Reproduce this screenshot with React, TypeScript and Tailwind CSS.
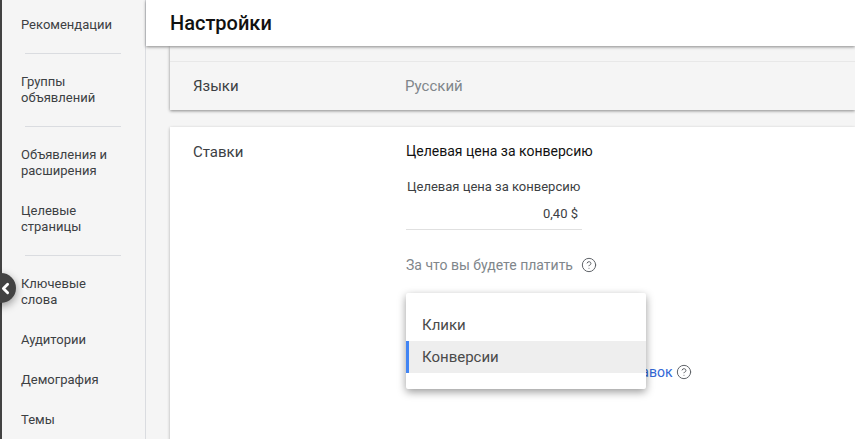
import { ChevronLeft, CircleHelp } from 'lucide-react';

function NavItem({ children }: { children: React.ReactNode }) {
  return (
    <div className="flex min-h-10 items-center py-3 pl-[19px] pr-4 text-[13px] leading-4 text-[#3c4043]">
      <span>{children}</span>
    </div>
  );
}

function NavDivider() {
  return <div className="mx-[23px] my-2 h-px w-[96px] bg-[#dadce0]" />;
}

export default function App() {
  return (
    <div className="relative flex h-[439px] w-[855px] overflow-hidden bg-[#f5f5f5] font-['Roboto',sans-serif]">
      <aside className="h-full w-[146px] shrink-0 border-l-2 border-r border-l-[#424242] border-r-[#dadce0] bg-[#f5f5f5] pt-[5px]">
        <NavItem>Рекомендации</NavItem>
        <NavDivider />
        <NavItem>Группы<br />объявлений</NavItem>
        <NavDivider />
        <NavItem>Объявления и<br />расширения</NavItem>
        <NavItem>Целевые<br />страницы</NavItem>
        <NavDivider />
        <NavItem>Ключевые<br />слова</NavItem>
        <NavItem>Аудитории</NavItem>
        <NavItem>Демография</NavItem>
        <NavItem>Темы</NavItem>
      </aside>

      <button className="absolute left-[-14px] top-[273px] flex h-[30px] w-[30px] items-center justify-end rounded-full bg-[#424242] pr-[2px] text-white shadow-[0_3px_8px_rgba(0,0,0,0.4)]">
        <ChevronLeft size={17} strokeWidth={4} />
      </button>

      <main className="relative min-w-0 flex-1">
        <header className="relative z-10 flex h-[46px] items-center bg-white pb-[1px] pl-6 text-[20px] font-medium text-[#111] shadow-[0_1px_3px_rgba(0,0,0,0.45)]">
          Настройки
        </header>

        <div className="ml-6 flex h-[64px] flex-col justify-end bg-[#f5f5f5] shadow-[0_1px_3px_rgba(0,0,0,0.45)]">
          <div className="flex h-[49px] items-center border-t border-[#e8e8e8] pl-[23px] text-[15px]">
            <span className="w-[212px] text-[#3c4043]">Языки</span>
            <span className="text-[#80868b]">Русский</span>
          </div>
        </div>

        <div className="ml-6 mt-[17px] flex h-[400px] bg-white pl-[23px] pt-[14px] shadow-[0_1px_3px_rgba(0,0,0,0.3)]">
          <div className="w-[214px] pt-[1px] text-[15px] leading-5 text-[#3c4043]">Ставки</div>
          <div className="-ml-px flex flex-col">
            <div className="text-[14px] leading-5 text-[#111]">Целевая цена за конверсию</div>
            <div className="mt-[18px] pl-px text-[13px] leading-4 text-[#3c4043]">Целевая цена за конверсию</div>
            <div className="mt-[6px] w-[176px] border-b border-[#e0e0e0] pb-[5px] pr-[4px] pt-[3px] text-right text-[13px] leading-5 text-[#3c4043]">
              0,40 $
            </div>
            <div className="mt-[25px] flex items-center gap-2 text-[14px] leading-5 text-[#80868b]">
              За что вы будете платить
              <CircleHelp size={16} strokeWidth={1.5} className="text-[#5f6368]" />
            </div>
            <div className="mt-[87px] flex items-center gap-1 pl-[3px] text-[14px] leading-5 text-[#3367d6]">
              Дополнительные настройки для ставок
              <CircleHelp size={16} strokeWidth={1.5} className="text-[#5f6368]" />
            </div>
          </div>
        </div>

        <div className="absolute left-[260px] top-[293px] z-20 w-[240px] rounded-[2px] bg-white py-4 text-[15px] text-[#4a4a4a] shadow-[0_3px_8px_rgba(0,0,0,0.4)]">
          <div className="flex h-8 items-center pl-4">Клики</div>
          <div className="flex h-8 items-center border-l-[3px] border-[#4285f4] bg-[#eeeeee] pl-[13px]">Конверсии</div>
        </div>
      </main>
    </div>
  );
}
